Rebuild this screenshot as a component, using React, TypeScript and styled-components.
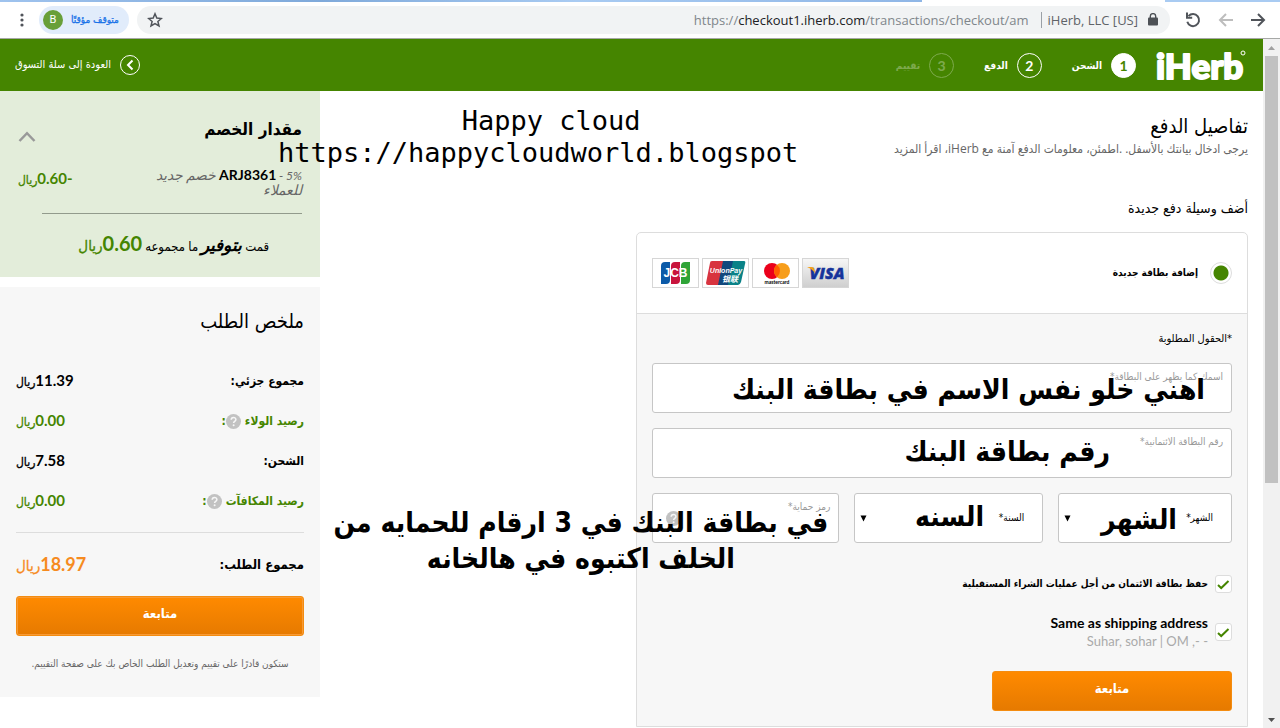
import React from "react";
import styled, { createGlobalStyle } from "styled-components";

const GREEN = "#458500";
const ARABIC = `"DejaVu Sans Condensed", "DejaVu Sans", sans-serif`;

const GlobalStyle = createGlobalStyle`
  *, *::before, *::after { box-sizing: border-box; }
  body {
    margin: 0;
    background: #fff;
    color: #000;
    font-family: Lato, ${ARABIC};
    font-size: 12px;
  }
  h1, h2, p { margin: 0; font-weight: 400; }
  button, input, select { font: inherit; color: inherit; margin: 0; }
`;

const Window = styled.div`
  display: flex;
  flex-direction: column;
  height: 100vh;
  overflow: hidden;
`;

/* Browser chrome */

const TabEdge = styled.div`
  flex: none;
  height: 2px;
  background: linear-gradient(to left, #a9cbf2 0 9%, #fff 9% 28%, #8fb6e6 28%, #a9cbf2 55%, #7fa9da 75%, #9fc3ee);
`;

const BrowserBar = styled.div`
  flex: none;
  display: flex;
  align-items: center;
  height: 37px;
  padding: 0 14px 1px 13px;
  border-bottom: 1px solid #a6a8a6;
  gap: 8px;
`;

const NavButtons = styled.div`
  display: flex;
  align-items: center;
  gap: 16px;
  padding-left: 6px;
`;

const BarButton = styled.button`
  display: flex;
  padding: 0;
  border: 0;
  background: none;
`;

const AddressPill = styled.div`
  flex: 1;
  display: flex;
  align-items: center;
  height: 28px;
  padding: 0 12px 0 10px;
  border-radius: 14px;
  background: #f1f3f4;
  color: #5f6368;
  font-family: "Open Sans", sans-serif;
  font-size: 13px;
`;

const Owner = styled.span`
  margin-right: 10px;
  padding-left: 6px;
  border-left: 1px solid #9aa0a6;
  line-height: 16px;
`;

const Url = styled.span`
  flex: 1;
  padding-right: 12px;
  text-align: right;
  color: #80868b;
  b { font-weight: 400; color: #202124; }
`;

const Profile = styled.button`
  display: flex;
  align-items: center;
  gap: 8px;
  height: 28px;
  padding: 0 10px 0 4px;
  border: 0;
  border-radius: 14px;
  background: #e1ecfb;
  color: #1a73e8;
  font: 400 10px ${ARABIC};
  -webkit-text-stroke: 0.3px;
`;

const Avatar = styled.span`
  width: 20px;
  height: 20px;
  border-radius: 50%;
  background: #689f38;
  color: #fff;
  font: 11px/20px Roboto, sans-serif;
  text-align: center;
  -webkit-text-stroke: 0;
`;

/* Page frame */

const Viewport = styled.div`
  flex: 1;
  min-height: 0;
  display: flex;
`;

const Page = styled.div`
  position: relative;
  flex: 1;
  min-width: 0;
`;

const ScrollTrack = styled.div`
  display: flex;
  flex-direction: column;
  align-items: center;
  width: 17px;
  background: #f1f1f1;
`;

const ScrollArrow = styled.span`
  flex: none;
  display: grid;
  place-items: center;
  width: 17px;
  height: 17px;
`;

const ScrollThumb = styled.div`
  width: 13px;
  height: 62%;
  background: #c1c1c1;
`;

const ScrollGap = styled.div`
  flex: 1;
`;

/* Site header */

const Header = styled.header`
  display: flex;
  align-items: center;
  height: 52px;
  padding: 0 17px 0 15px;
  background: ${GREEN};
  color: #fff;
`;

const Brand = styled.a`
  display: flex;
  margin-left: 20px;
  svg { overflow: visible; }
`;

const Steps = styled.ol`
  flex: 1;
  display: flex;
  gap: 30px;
  margin: 0;
  padding: 0;
  list-style: none;
`;

const Step = styled.li<{ $dim?: boolean }>`
  display: flex;
  align-items: center;
  gap: 9px;
  font: 700 10px/25px ${ARABIC};
  opacity: ${(p) => (p.$dim ? 0.3 : 1)};
`;

const StepNumber = styled.span<{ $current?: boolean }>`
  width: 25px;
  height: 25px;
  border: 1px solid #fff;
  border-radius: 50%;
  background: ${(p) => (p.$current ? "#fff" : "transparent")};
  color: ${(p) => (p.$current ? GREEN : "#fff")};
  font: 700 14px/23px Lato, sans-serif;
  text-align: center;
`;

const BackLink = styled.a`
  display: flex;
  align-items: center;
  gap: 9px;
  color: #fff;
  font: 11px/20px ${ARABIC};
  text-decoration: none;
`;

/* Columns */

const Columns = styled.div`
  display: flex;
  align-items: flex-start;
`;

const Main = styled.main`
  flex: 1;
  padding: 22px 15px 0 0;
`;

const Title = styled.h1`
  font: 20px/26px ${ARABIC};
`;

const Intro = styled.p`
  color: #666;
  font-family: "Open Sans", ${ARABIC};
  font-size: 12px;
  line-height: 20px;
`;

const SectionTitle = styled.h2`
  margin: 39px 0 14px;
  font: 14px/20px ${ARABIC};
`;

const Card = styled.form`
  width: 66%;
  border: 1px solid #ddd;
  border-radius: 5px 5px 0 0;
`;

const CardTop = styled.div`
  display: flex;
  align-items: center;
  justify-content: space-between;
  height: 80px;
  padding: 0 15px;
`;

const RadioLabel = styled.label`
  display: flex;
  align-items: center;
  gap: 12px;
  font: 700 10px/20px ${ARABIC};
`;

const Radio = styled.input`
  appearance: none;
  width: 22px;
  height: 22px;
  border: 1px solid #ddd;
  border-radius: 50%;
  background: radial-gradient(circle, ${GREEN} 7px, #fff 8px);
`;

const CardBrands = styled.div`
  display: flex;
  gap: 3px;
  direction: ltr;
`;

const BrandBox = styled.span<{ $shaded?: boolean }>`
  display: flex;
  width: 47px;
  height: 30px;
  border: 1px solid #d6d6d6;
  background: ${(p) => (p.$shaded ? "linear-gradient(#f6f6f6, #cfcfcf)" : "#fff")};
`;

const CardBody = styled.div`
  display: flex;
  flex-direction: column;
  gap: 15px;
  padding: 15px;
  border-top: 1px solid #ddd;
  background: #f7f7f7;
`;

const Required = styled.p`
  font: 11px/19px ${ARABIC};
`;

const Field = styled.div`
  position: relative;
  display: grid;
  height: 50px;
  border: 1px solid #c6c6c6;
  border-radius: 3px;
  background: #fff;
`;

const FieldLabel = styled.label`
  grid-area: 1 / 1;
  padding: 4px 8px;
  color: #999;
  font: 10px/18px ${ARABIC};
`;

const TextInput = styled.input`
  grid-area: 1 / 1;
  width: 100%;
  padding: 18px 8px 4px;
  border: 0;
  background: transparent;
`;

const SelectBox = styled.select`
  grid-area: 1 / 1;
  appearance: none;
  width: 100%;
  padding: 0 18px;
  border: 0;
  background: transparent;
  font: 10px/20px ${ARABIC};
`;

const Caret = styled.svg`
  grid-area: 1 / 1;
  justify-self: end;
  align-self: center;
  margin-left: 5px;
  pointer-events: none;
`;

const HintSpot = styled.span`
  grid-area: 1 / 1;
  justify-self: end;
  align-self: center;
  display: flex;
  margin-left: 13px;
`;

const FieldRow = styled.div`
  display: grid;
  grid-template-columns: 174fr 189fr 188fr;
  gap: 15px;
`;

/* Hand-added remarks that lie over the form */
const Remark = styled.span<{ $top: number; $right: number }>`
  position: absolute;
  z-index: 2;
  top: ${(p) => p.$top}px;
  right: ${(p) => p.$right}px;
  color: #000;
  font: 700 28px/36px ${ARABIC};
  text-align: center;
  white-space: nowrap;
  pointer-events: none;
`;

const Watermark = styled.p`
  position: absolute;
  z-index: 2;
  top: 66px;
  left: 278px;
  display: grid;
  direction: ltr;
  font: 27px/32px "DejaVu Sans Mono", monospace;
  text-align: center;
  pointer-events: none;
`;

const WatermarkName = styled.span`
  padding-left: 26px;
`;

const CheckRow = styled.label<{ $gap: number }>`
  display: flex;
  align-items: center;
  gap: 7px;
  margin-top: ${(p) => p.$gap}px;
`;

const TickBox = styled.span`
  display: grid;
  width: 17px;
  height: 18px;
  svg { grid-area: 1 / 1; place-self: center; pointer-events: none; }
`;

const TickInput = styled.input`
  grid-area: 1 / 1;
  appearance: none;
  width: 100%;
  height: 100%;
  border: 1px solid #ddd;
  border-radius: 3px;
  background: #fff;
`;

const CheckText = styled.span`
  font: 700 10px/20px ${ARABIC};
`;

const AddressText = styled.span`
  display: grid;
  direction: ltr;
  font-size: 13px;
  line-height: 19px;
  text-align: right;
  color: #aaa;
  strong { font-size: 14px; color: #000; }
`;

const PrimaryButton = styled.button<{ $wide?: boolean }>`
  width: ${(p) => (p.$wide ? "100%" : "240px")};
  height: 40px;
  padding: 0 0 5px;
  border: 1px solid #f48c10;
  border-radius: 3px;
  background: linear-gradient(#ff8a00, #e67a00);
  box-shadow: ${(p) => (p.$wide ? "inset 0 0 0 1px #f79a35" : "none")};
  color: #fff;
  font: 700 13px/20px ${ARABIC};
`;

const ButtonLine = styled.div`
  margin-top: 5px;
`;

/* Sidebar */

const Sidebar = styled.aside`
  width: 320px;
  display: grid;
  gap: 10px;
`;

const Savings = styled.section`
  padding: 24px 18px 16px;
  background: #e3edda;
`;

const SavingsHead = styled.div`
  display: flex;
  align-items: center;
  justify-content: space-between;
  h2 { font: 700 17px/28px ${ARABIC}; }
  button { padding-top: 14px; }
`;

const CouponRow = styled.div`
  display: flex;
  justify-content: space-between;
  margin: 25px 0 16px;
`;

const Coupon = styled.p`
  width: 150px;
  color: #666;
  font-size: 14px;
  font-style: italic;
  line-height: 14px;
  small { font-size: 12px; }
  strong { color: #000; font-style: normal; }
`;

const Amount = styled.span<{ $tone?: "green" | "orange"; $size?: number }>`
  color: ${(p) => (p.$tone === "green" ? GREEN : p.$tone === "orange" ? "#f68b1f" : "#000")};
  font-family: Lato, ${ARABIC};
  font-size: ${(p) => p.$size ?? 15}px;
  font-weight: 700;
  line-height: 20px;
  small {
    font-size: ${(p) => (p.$size && p.$size > 16 ? 15 : 12)}px;
    font-weight: 400;
    -webkit-text-stroke: 0.3px;
  }
`;

const Divider = styled.hr<{ $inset?: boolean }>`
  height: 1px;
  margin: 0 0 0 ${(p) => (p.$inset ? 24 : 0)}px;
  border: 0;
  background: ${(p) => (p.$inset ? "#929b8c" : "#ddd")};
`;

const Saved = styled.p`
  display: flex;
  align-items: baseline;
  gap: 3px;
  height: 31px;
  margin-top: 16px;
  padding-right: 33px;
  line-height: 30px;
  font-size: 13px;
  white-space: nowrap;
  em { font-size: 17px; font-weight: 700; }
`;

const Summary = styled.section`
  padding: 20px 16px 23px;
  background: #f7f7f7;
  h2 { margin-bottom: 26px; font: 20px/28px ${ARABIC}; }
`;

const Line = styled.div<{ $tone?: "green"; $total?: boolean }>`
  display: flex;
  align-items: center;
  justify-content: space-between;
  height: ${(p) => (p.$total ? 63 : 40)}px;
  color: ${(p) => (p.$tone === "green" ? GREEN : "#000")};
  font: 700 ${(p) => (p.$total ? 13 : 12)}px/20px ${ARABIC};
`;

const LineLabel = styled.span`
  display: flex;
  align-items: center;
  svg { margin-right: 4px; }
`;

const LineGroup = styled.div`
  padding-bottom: 11px;
`;

const Note = styled.p`
  margin-top: 18px;
  color: #666;
  font: 10px/20px ${ARABIC};
  text-align: center;
  white-space: nowrap;
`;

const HelpIcon = () => (
  <svg width="15" height="15" viewBox="0 0 15 15" aria-hidden="true">
    <circle cx="7.5" cy="7.5" r="7.5" fill="#c2c2c2" />
    <path d="M5.2 5.8c0-3 4.7-3 4.7-.2 0 1.7-2.3 1.7-2.3 3.4" fill="none" stroke="#f7f7f7" strokeWidth="1.5" />
    <circle cx="7.6" cy="11.2" r="1" fill="#f7f7f7" />
  </svg>
);

const Check = () => (
  <svg width="13" height="11" viewBox="0 0 13 11" aria-hidden="true">
    <path d="M1 6l3.2 3L11.5 2" fill="none" stroke={GREEN} strokeWidth="2" />
  </svg>
);

const Riyal = ({ value, tone, size }: { value: string; tone?: "green" | "orange"; size?: number }) => (
  <Amount $tone={tone} $size={size}>
    {value}
    <small>ريال</small>
  </Amount>
);

const rows: { label: string; value: string; tone?: "green"; help?: boolean }[] = [
  { label: "مجموع جزئي", value: "11.39" },
  { label: "رصيد الولاء", value: "0.00", tone: "green", help: true },
  { label: "الشحن", value: "7.58" },
  { label: "رصيد المكافآت", value: "0.00", tone: "green", help: true },
];

const Browser = () => (
  <>
    <TabEdge />
    <BrowserBar>
      <NavButtons>
        <BarButton aria-label="Forward">
          <svg width="16" height="16" viewBox="0 0 16 16" fill="none" stroke="#50545a" strokeWidth="2">
            <path d="M1 8h13M8 2l6 6-6 6" />
          </svg>
        </BarButton>
        <BarButton aria-label="Back">
          <svg width="16" height="16" viewBox="0 0 16 16" fill="none" stroke="#bdbdbd" strokeWidth="2">
            <path d="M15 8H2M8 2L2 8l6 6" />
          </svg>
        </BarButton>
        <BarButton aria-label="Reload">
          <svg width="18" height="18" viewBox="0 0 18 18" fill="none" stroke="#50545a" strokeWidth="2">
            <path d="M4.5 5.200a6 6 0 1 1-1.200 5.600" />
            <path d="M3 1.500v5.200h5.200" />
          </svg>
        </BarButton>
      </NavButtons>
      <AddressPill>
        <svg width="10" height="13" viewBox="0 0 10 13" aria-hidden="true">
          <rect y="4.5" width="10" height="8" rx="1" fill="#4d5156" />
          <path d="M2.3 5V3.300a2.700 2.700 0 0 1 5.400 0V5" fill="none" stroke="#4d5156" strokeWidth="1.4" />
        </svg>
        <Owner dir="ltr">iHerb, LLC [US]</Owner>
        <Url dir="ltr">
          https://<b>checkout1.iherb.com</b>/transactions/checkout/am
        </Url>
        <BarButton aria-label="Bookmark">
          <svg width="16" height="16" viewBox="0 0 16 16" fill="none" stroke="#50545a" strokeWidth="1.5">
            <path d="M8 1.800l1.800 4.300 4.600.4-3.500 3 1.100 4.500L8 11.600 4 14l1.100-4.500-3.500-3 4.600-.4z" />
          </svg>
        </BarButton>
      </AddressPill>
      <Profile>
        متوقف مؤقتًا
        <Avatar>B</Avatar>
      </Profile>
      <BarButton aria-label="Menu">
        <svg width="18" height="16" viewBox="0 0 18 16" fill="#50545a">
          <circle cx="9" cy="3" r="1.6" />
          <circle cx="9" cy="8" r="1.6" />
          <circle cx="9" cy="13" r="1.6" />
        </svg>
      </BarButton>
    </BrowserBar>
  </>
);

const SiteHeader = () => (
  <Header>
    <Brand href="#" aria-label="iHerb">
      <svg width="90" height="36" viewBox="0 0 90 36" direction="ltr">
        <text x="0" y="32" fontFamily="Lato, sans-serif" fontWeight="900" fontSize="35" fill="#fff" stroke="#fff" strokeWidth="2" strokeLinejoin="round">
          iHerb
        </text>
        <circle cx="87" cy="6" r="2" fill="none" stroke="#fff" strokeWidth="1" />
      </svg>
    </Brand>
    <Steps>
      <Step>
        <StepNumber $current>1</StepNumber>الشحن
      </Step>
      <Step>
        <StepNumber>2</StepNumber>الدفع
      </Step>
      <Step $dim>
        <StepNumber>3</StepNumber>تقييم
      </Step>
    </Steps>
    <BackLink href="#">
      <svg width="20" height="20" viewBox="0 0 20 20" fill="none" stroke="#fff" aria-hidden="true">
        <circle cx="10" cy="10" r="9.5" />
        <path d="M12.5 5.500L8 10l4.500 4.500" strokeWidth="2" />
      </svg>
      العودة إلى سلة التسوق
    </BackLink>
  </Header>
);

const Brands = () => (
  <CardBrands>
    <BrandBox>
      <svg width="45" height="28" viewBox="0 0 45 28" role="img" aria-label="JCB">
        <path d="M8 7q0-4 4-4h5v18q0 4-4 4H8z" fill="#0b5aa8" />
        <path d="M18 7q0-4 4-4h5v18q0 4-4 4h-5z" fill="#c8143c" />
        <path d="M28 7q0-4 4-4h5v18q0 4-4 4h-5z" fill="#2fa437" />
        <text x="22.5" y="18" textAnchor="middle" fontFamily="Liberation Sans, sans-serif" fontWeight="700" fontSize="12" fill="#fff">JCB</text>
      </svg>
    </BrandBox>
    <BrandBox>
      <svg width="45" height="28" viewBox="0 0 45 28" role="img" aria-label="UnionPay">
        <path d="M9 2h14l-5 24H5q-2 0-2-2L7 4q0-2 2-2z" fill="#d8343f" />
        <path d="M20 2h14l-5 24H15z" fill="#12487d" />
        <path d="M30 2h11q2 0 1 3l-4 18q-1 3-3 3H25z" fill="#0a8287" />
        <text x="23" y="14" textAnchor="middle" fontFamily="Liberation Sans, sans-serif" fontWeight="700" fontStyle="italic" fontSize="7" fill="#fff">UnionPay</text>
        <text x="27" y="23" textAnchor="middle" fontFamily="Noto Sans CJK SC, sans-serif" fontWeight="700" fontStyle="italic" fontSize="8" fill="#fff">银联</text>
      </svg>
    </BrandBox>
    <BrandBox>
      <svg width="45" height="28" viewBox="0 0 45 28" role="img" aria-label="Mastercard">
        <circle cx="19" cy="12" r="8" fill="#eb001b" />
        <circle cx="29" cy="12" r="8" fill="#f79e1b" />
        <path d="M24 5.800a8 8 0 0 1 0 12.400a8 8 0 0 1 0-12.400z" fill="#ff5f00" />
        <text x="24" y="25" textAnchor="middle" fontFamily="Lato, sans-serif" fontWeight="700" fontSize="5" fill="#000">mastercard</text>
      </svg>
    </BrandBox>
    <BrandBox $shaded>
      <svg width="45" height="28" viewBox="0 0 45 28" role="img" aria-label="Visa">
        <text x="24" y="20" textAnchor="middle" fontFamily="Open Sans, sans-serif" fontWeight="800" fontStyle="italic" fontSize="16" fill="#16339b" stroke="#16339b" strokeWidth="0.4">VISA</text>
        <path d="M4 8h5q2 0 2.400 2.500l.8 4Q9.500 10 4 8z" fill="#f3a11c" />
      </svg>
    </BrandBox>
  </CardBrands>
);

const CaretDown = () => (
  <Caret width="7" height="7" viewBox="0 0 7 7" aria-hidden="true">
    <path d="M0.5 0.500h6L3.500 6.500z" fill="#000" />
  </Caret>
);

const PaymentForm = () => (
  <Card onSubmit={(e) => e.preventDefault()}>
    <CardTop>
      <RadioLabel>
        <Radio type="radio" name="method" defaultChecked />
        إضافة بطاقة جديدة
      </RadioLabel>
      <Brands />
    </CardTop>
    <CardBody>
      <Required>*الحقول المطلوبة</Required>
      <Field>
        <FieldLabel htmlFor="holder">اسمك كما يظهر على البطاقة*</FieldLabel>
        <TextInput id="holder" type="text" />
        <Remark $top={8} $right={26}>اهني خلو نفس الاسم في بطاقة البنك</Remark>
      </Field>
      <Field>
        <FieldLabel htmlFor="number">رقم البطاقة الائتمانية*</FieldLabel>
        <TextInput id="number" type="text" />
        <Remark $top={5} $right={121}>رقم بطاقة البنك</Remark>
      </Field>
      <FieldRow>
        <Field>
          <SelectBox aria-label="الشهر">
            <option>الشهر*</option>
          </SelectBox>
          <CaretDown />
          <Remark $top={8} $right={54}>الشهر</Remark>
        </Field>
        <Field>
          <SelectBox aria-label="السنة">
            <option>السنة*</option>
          </SelectBox>
          <CaretDown />
          <Remark $top={5} $right={58}>السنه</Remark>
        </Field>
        <Field>
          <FieldLabel htmlFor="code">رمز حماية*</FieldLabel>
          <TextInput id="code" type="text" />
          <HintSpot>
            <HelpIcon />
          </HintSpot>
          <Remark $top={11} $right={10}>
            في بطاقة البنك في 3 ارقام للحمايه من
            <br />
            الخلف اكتبوه في هالخانه
          </Remark>
        </Field>
      </FieldRow>
      <CheckRow $gap={16}>
        <TickBox>
          <TickInput type="checkbox" defaultChecked />
          <Check />
        </TickBox>
        <CheckText>حفظ بطاقة الائتمان من أجل عمليات الشراء المستقبلية</CheckText>
      </CheckRow>
      <CheckRow $gap={4}>
        <TickBox>
          <TickInput type="checkbox" defaultChecked />
          <Check />
        </TickBox>
        <AddressText>
          <strong>Same as shipping address</strong>
          <span>Suhar, sohar | OM ,- -</span>
        </AddressText>
      </CheckRow>
      <ButtonLine>
        <PrimaryButton type="submit">متابعة</PrimaryButton>
      </ButtonLine>
    </CardBody>
  </Card>
);

const OrderSidebar = () => (
  <Sidebar>
    <Savings>
      <SavingsHead>
        <h2>مقدار الخصم</h2>
        <BarButton aria-label="طي">
          <svg width="18" height="11" viewBox="0 0 18 11" fill="none" stroke="#999" strokeWidth="2.5">
            <path d="M1.5 10L9 2.200 16.500 10" />
          </svg>
        </BarButton>
      </SavingsHead>
      <CouponRow>
        <Coupon>
          <small>5% - </small>
          <strong>ARJ8361</strong> خصم جديد للعملاء
        </Coupon>
        <Riyal value="-0.60" tone="green" />
      </CouponRow>
      <Divider $inset />
      <Saved>
        <span>قمت</span>
        <em>بتوفير</em>
        <span>ما مجموعه</span>
        <Riyal value="0.60" tone="green" size={20} />
      </Saved>
    </Savings>
    <Summary>
      <h2>ملخص الطلب</h2>
      <LineGroup>
        {rows.map((r) => (
          <Line key={r.label} $tone={r.tone}>
            <LineLabel>
              {r.label}
              {r.help && <HelpIcon />}:
            </LineLabel>
            <Riyal value={r.value} tone={r.tone} />
          </Line>
        ))}
      </LineGroup>
      <Divider />
      <Line $total>
        <LineLabel>مجموع الطلب:</LineLabel>
        <Riyal value="18.97" tone="orange" size={18} />
      </Line>
      <PrimaryButton $wide>متابعة</PrimaryButton>
      <Note>ستكون قادرًا على تقييم وتعديل الطلب الخاص بك على صفحة التقييم.</Note>
    </Summary>
  </Sidebar>
);

export default function App() {
  return (
    <Window dir="rtl">
      <GlobalStyle />
      <Browser />
      <Viewport>
        <ScrollTrack>
          <ScrollArrow>
            <svg width="7" height="4" viewBox="0 0 7 4">
              <path d="M0 4L3.500 0 7 4z" fill="#a0a0a0" />
            </svg>
          </ScrollArrow>
          <ScrollThumb />
          <ScrollGap />
          <ScrollArrow>
            <svg width="7" height="4" viewBox="0 0 7 4">
              <path d="M0 0h7L3.500 4z" fill="#505050" />
            </svg>
          </ScrollArrow>
        </ScrollTrack>
        <Page>
          <SiteHeader />
          <Columns>
            <Main>
              <Title>تفاصيل الدفع</Title>
              <Intro>يرجى ادخال بيانتك بالأسفل. .اطمئن، معلومات الدفع آمنة مع iHerb، اقرأ المزيد</Intro>
              <SectionTitle>أضف وسيلة دفع جديدة</SectionTitle>
              <PaymentForm />
            </Main>
            <OrderSidebar />
          </Columns>
          <Watermark>
            <WatermarkName>Happy cloud</WatermarkName>
            <span>https://happycloudworld.blogspot</span>
          </Watermark>
        </Page>
      </Viewport>
    </Window>
  );
}
